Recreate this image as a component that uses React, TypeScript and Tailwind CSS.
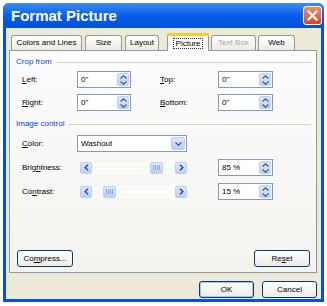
import React from "react";

function U({ children }: { children: React.ReactNode }) {
  return <span className="underline underline-offset-1">{children}</span>;
}

function Up() {
  return (
    <svg width="7" height="4" viewBox="0 0 7 4">
      <path d="M0.5 3.5 L3.5 0.8 L6.5 3.5" fill="none" stroke="#4d6185" strokeWidth="1.3" />
    </svg>
  );
}

function Down() {
  return (
    <svg width="7" height="4" viewBox="0 0 7 4">
      <path d="M0.5 0.5 L3.5 3.2 L6.5 0.5" fill="none" stroke="#4d6185" strokeWidth="1.3" />
    </svg>
  );
}

function Spin({ value, w }: { value: string; w: string }) {
  return (
    <div className={`flex h-[17px] ${w} items-stretch border border-[#7f9db9] bg-white`}>
      <div className="flex-1 pl-[3px] leading-[15px]">{value}</div>
      <div className="m-[1px] flex w-[12px] flex-col rounded-[2px] border border-[#bccff7] bg-gradient-to-b from-[#dde8fe] to-[#bdd0f8]">
        <div className="flex flex-1 items-end justify-center pb-[1px]">
          <Up />
        </div>
        <div className="flex flex-1 items-start justify-center pt-[1px]">
          <Down />
        </div>
      </div>
    </div>
  );
}

function ArrowBtn({ dir }: { dir: "l" | "r" }) {
  return (
    <div className="flex h-[12px] w-[12px] items-center justify-center rounded-[2px] border border-[#bccff7] bg-gradient-to-b from-[#dde8fe] to-[#b9cdf8]">
      <svg width="5" height="7" viewBox="0 0 5 7">
        <path
          d={dir === "l" ? "M4 0.7 L1.2 3.5 L4 6.3" : "M1 0.7 L3.8 3.5 L1 6.3"}
          fill="none"
          stroke="#3c4f78"
          strokeWidth="1.5"
        />
      </svg>
    </div>
  );
}

function Slider({ thumb }: { thumb: number }) {
  return (
    <div className="ml-[3px] flex h-[12px] w-[107px] items-center">
      <ArrowBtn dir="l" />
      <div className="relative h-[12px] flex-1 bg-[#fbfbf8]">
        <div
          className="absolute top-0 flex h-[12px] w-[13px] items-center justify-center gap-[1px] rounded-[2px] border border-[#bccff7] bg-gradient-to-b from-[#dde8fe] to-[#b9cdf8]"
          style={{ left: thumb }}
        >
          <div className="h-[5px] w-[1px] bg-[#8ea6d8]" />
          <div className="h-[5px] w-[1px] bg-[#8ea6d8]" />
          <div className="h-[5px] w-[1px] bg-[#8ea6d8]" />
          <div className="h-[5px] w-[1px] bg-[#8ea6d8]" />
        </div>
      </div>
      <ArrowBtn dir="r" />
    </div>
  );
}

function Tab({ label, cls, active, disabled }: { label: string; cls: string; active?: boolean; disabled?: boolean }) {
  if (active) {
    return (
      <div className={`${cls} relative z-10 -mb-[1px] flex h-[18px] flex-col rounded-t-[3px] border border-b-0 border-[#919b9c] bg-[#fcfcfe]`}>
        <div className="-mx-[1px] -mt-[1px] h-[3px] rounded-t-[3px] bg-[#ffc83c]" />
        <div className="flex flex-1 items-center justify-center">
          <span className="border border-dotted border-[#333] px-[2px] leading-[9px]">{label}</span>
        </div>
      </div>
    );
  }
  return (
    <div
      className={`${cls} flex h-[15px] items-center justify-center rounded-t-[3px] border border-b-0 border-[#919b9c] bg-gradient-to-b from-white to-[#eceae3] ${
        disabled ? "text-[#aca899]" : "text-black"
      }`}
    >
      {label}
    </div>
  );
}

function Header({ title }: { title: string }) {
  return (
    <div className="flex h-[10px] items-center pl-[6px] pr-[5px]">
      <span className="text-[#0046d5]">{title}</span>
      <div className="ml-[5px] h-[1px] flex-1 bg-[#d0d0bf]" />
    </div>
  );
}

function Button({ children, cls, def }: { children: React.ReactNode; cls: string; def?: boolean }) {
  return (
    <div
      className={`${cls} flex h-[17px] items-center justify-center rounded-[3px] border border-[#003c74] bg-gradient-to-b from-white to-[#ecebe6] ${
        def ? "shadow-[inset_0_0_0_1px_#a8c3f0]" : ""
      }`}
    >
      {children}
    </div>
  );
}

export default function App() {
  return (
    <div className="h-[306px] w-[327px] bg-white pl-[3px] pt-[3px] font-['Liberation_Sans',Arial,sans-serif] text-[8px] text-black">
      <div className="flex h-[299px] w-[321px] flex-col rounded-t-[6px] bg-[#0550e0] px-[3px] pb-[3px]">
        <div className="-mx-[3px] flex h-[25px] items-center justify-between rounded-t-[6px] bg-gradient-to-b from-[#3d8cf7] via-[#0a5cec] to-[#0250dd] pl-[8px] pr-[2px]">
          <span className="text-[15px] font-bold leading-none text-white">Format Picture</span>
          <div className="flex h-[19px] w-[19px] items-center justify-center rounded-[3px] border border-white bg-gradient-to-b from-[#f08a6a] to-[#d8421c]">
            <svg width="11" height="11" viewBox="0 0 11 11">
              <path d="M1.5 1.5 L9.5 9.5 M9.5 1.5 L1.5 9.5" stroke="white" strokeWidth="2.2" strokeLinecap="square" />
            </svg>
          </div>
        </div>

        <div className="flex flex-1 flex-col bg-[#ece9d8]">
          <div className="ml-[5px] mt-[4px] flex h-[18px] items-end">
            <Tab label="Colors and Lines" cls="w-[71px]" />
            <Tab label="Size" cls="ml-[3px] w-[37px]" />
            <Tab label="Layout" cls="ml-[3px] w-[34px]" />
            <Tab label="Picture" cls="ml-[8px] w-[42px]" active />
            <Tab label="Text Box" cls="ml-[2px] w-[45px]" disabled />
            <Tab label="Web" cls="ml-[2px] w-[37px]" />
          </div>

          <div className="ml-[3px] flex h-[223px] w-[308px] flex-col border border-[#919b9c] bg-gradient-to-b from-[#fcfcfe] to-[#f4f3ee]">
            <div className="mt-[6px]">
              <Header title="Crop from" />
            </div>

            <div className="mt-[4px] flex h-[17px] items-center pl-[12px]">
              <span className="w-[55px]"><U>L</U>eft:</span>
              <Spin value={'0"'} w="w-[54px]" />
              <span className="ml-[29px] w-[58px]"><U>T</U>op:</span>
              <Spin value={'0"'} w="w-[55px]" />
            </div>
            <div className="mt-[6px] flex h-[17px] items-center pl-[12px]">
              <span className="w-[55px]"><U>R</U>ight:</span>
              <Spin value={'0"'} w="w-[54px]" />
              <span className="ml-[29px] w-[58px]"><U>B</U>ottom:</span>
              <Spin value={'0"'} w="w-[55px]" />
            </div>

            <div className="mt-[8px]">
              <Header title="Image control" />
            </div>

            <div className="mt-[6px] flex h-[17px] items-center pl-[12px]">
              <span className="w-[55px]"><U>C</U>olor:</span>
              <div className="flex h-[17px] w-[110px] items-stretch border border-[#7f9db9] bg-white">
                <div className="flex-1 pl-[3px] leading-[15px]">Washout</div>
                <div className="m-[1px] flex w-[14px] items-center justify-center rounded-[2px] border border-[#bccff7] bg-gradient-to-b from-[#dde8fe] to-[#b9cdf8]">
                  <Down />
                </div>
              </div>
            </div>

            <div className="mt-[7px] flex h-[17px] items-center pl-[12px]">
              <span className="w-[55px]">Brig<U>h</U>tness:</span>
              <Slider thumb={58} />
              <div className="ml-[31px]">
                <Spin value="85 %" w="w-[55px]" />
              </div>
            </div>
            <div className="mt-[7px] flex h-[17px] items-center pl-[12px]">
              <span className="w-[55px]">Co<U>n</U>trast:</span>
              <Slider thumb={11} />
              <div className="ml-[31px]">
                <Spin value="15 %" w="w-[55px]" />
              </div>
            </div>

            <div className="mb-[5px] mt-auto flex items-center justify-between pl-[7px] pr-[6px]">
              <Button cls="w-[56px]">
                Co<U>m</U>press...
              </Button>
              <Button cls="w-[56px]">
                Re<U>s</U>et
              </Button>
            </div>
          </div>

          <div className="mt-[8px] flex justify-end gap-[8px] pr-[4px]">
            <Button cls="w-[55px]" def>
              OK
            </Button>
            <Button cls="w-[55px]">Cancel</Button>
          </div>
        </div>
      </div>
    </div>
  );
}
